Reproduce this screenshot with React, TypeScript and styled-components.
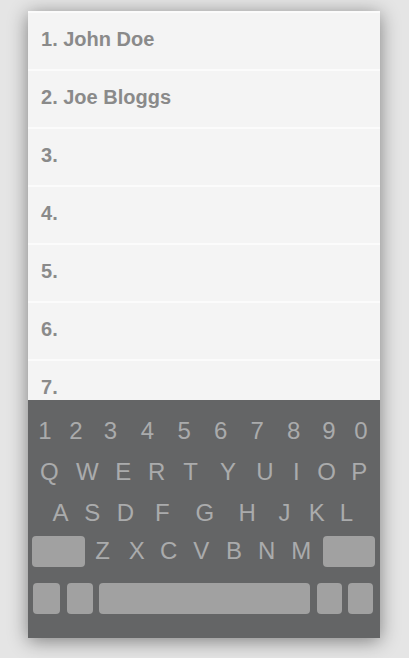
import styled, { createGlobalStyle } from 'styled-components';

const GlobalStyle = createGlobalStyle`
  html, body {
    margin: 0;
    padding: 0;
    background: #e5e5e5;
  }
  body {
    font-family: 'Liberation Sans', Arial, sans-serif;
  }
`;

const names = ['John Doe', 'Joe Bloggs', '', '', '', '', ''];

type TextRowDef = { keys: string[]; cols: number[] };

const numberRow: TextRowDef = {
  keys: ['1', '2', '3', '4', '5', '6', '7', '8', '9', '0'],
  cols: [30, 32, 37, 37, 36.5, 36.5, 36.5, 36.5, 34, 30],
};

const qwertyRow: TextRowDef = {
  keys: ['Q', 'W', 'E', 'R', 'T', 'Y', 'U', 'I', 'O', 'P'],
  cols: [38.5, 37.6, 34.5, 32.2, 35.5, 39.5, 34, 28.9, 31.7, 33.6],
};

const asdfRow: TextRowDef = {
  keys: ['A', 'S', 'D', 'F', 'G', 'H', 'J', 'K', 'L'],
  cols: [31, 32.4, 33.9, 40.1, 44.6, 40.2, 34.4, 30.2, 29],
};

const zxcvKeys = ['Z', 'X', 'C', 'V', 'B', 'N', 'M'];
const zxcvCols = [36, 32, 32, 33, 32.5, 33, 36];

const toTemplate = (cols: number[]) => cols.map((c) => `${c}px`).join(' ');

const App = () => {
  return (
    <>
      <GlobalStyle />
      <Page>
        <Card>
          <List>
            {names.map((name, i) => (
              <Row key={i}>
                {i + 1}. {name}
              </Row>
            ))}
          </List>
          <Keyboard>
            {[numberRow, qwertyRow].map((row) => (
              <TextRow key={row.keys[0]} $cols={toTemplate(row.cols)} $height={41}>
                {row.keys.map((k) => (
                  <Char key={k}>{k}</Char>
                ))}
              </TextRow>
            ))}
            <TextRow $cols={toTemplate(asdfRow.cols)} $height={42}>
              {asdfRow.keys.map((k) => (
                <Char key={k}>{k}</Char>
              ))}
            </TextRow>
            <ShiftRow $cols={`52.7px ${toTemplate(zxcvCols)} 55.7px`}>
              <KeyCap />
              {zxcvKeys.map((k) => (
                <Char key={k}>{k}</Char>
              ))}
              <KeyCap $offset={4} />
            </ShiftRow>
            <BottomRow>
              <KeyCap />
              <KeyCap />
              <KeyCap />
              <KeyCap />
              <KeyCap />
            </BottomRow>
          </Keyboard>
        </Card>
      </Page>
    </>
  );
};

export default App;

const Page = styled.div`
  width: 409px;
  height: 658px;
  padding: 11px 0 0 28px;
  box-sizing: border-box;
`;

const Card = styled.div`
  width: 352px;
  height: 627px;
  display: flex;
  flex-direction: column;
  overflow: hidden;
  background: #f4f4f4;
  box-shadow: 0 3px 18px rgba(0, 0, 0, 0.45);
`;

const List = styled.div`
  flex: 1;
  overflow: hidden;
`;

const Row = styled.div`
  height: 58px;
  flex-shrink: 0;
  box-sizing: border-box;
  border-top: 2px solid #fbfbfb;
  padding: 15px 13px 0;
  background: #f4f4f4;
  color: #8a8a8a;
  font-size: 20px;
  font-weight: 700;
  line-height: 23px;
  white-space: pre;
`;

const Keyboard = styled.div`
  height: 238px;
  flex-shrink: 0;
  box-sizing: border-box;
  padding: 10px 0 0;
  background: #646566;
  display: flex;
  flex-direction: column;
`;

const TextRow = styled.div<{ $cols: string; $height: number }>`
  display: grid;
  grid-template-columns: ${(p) => p.$cols};
  justify-content: center;
  align-items: center;
  height: ${(p) => p.$height}px;
  padding: 0 2px 0 0;
`;

const Char = styled.span`
  text-align: center;
  color: #aaabac;
  font-size: 24px;
  line-height: 30px;
`;

const ShiftRow = styled.div<{ $cols: string }>`
  display: grid;
  grid-template-columns: ${(p) => p.$cols};
  align-items: center;
  height: 34px;
  padding: 0 0 0 4px;
`;

const KeyCap = styled.div<{ $offset?: number }>`
  height: 31px;
  margin-left: ${(p) => p.$offset ?? 0}px;
  border-radius: 4px;
  background: #a1a1a1;
`;

const BottomRow = styled.div`
  display: grid;
  grid-template-columns: 27px 26px 1fr 25px 25px;
  gap: 6.5px;
  margin-top: 15px;
  padding: 0 7px 0 5px;
`;
